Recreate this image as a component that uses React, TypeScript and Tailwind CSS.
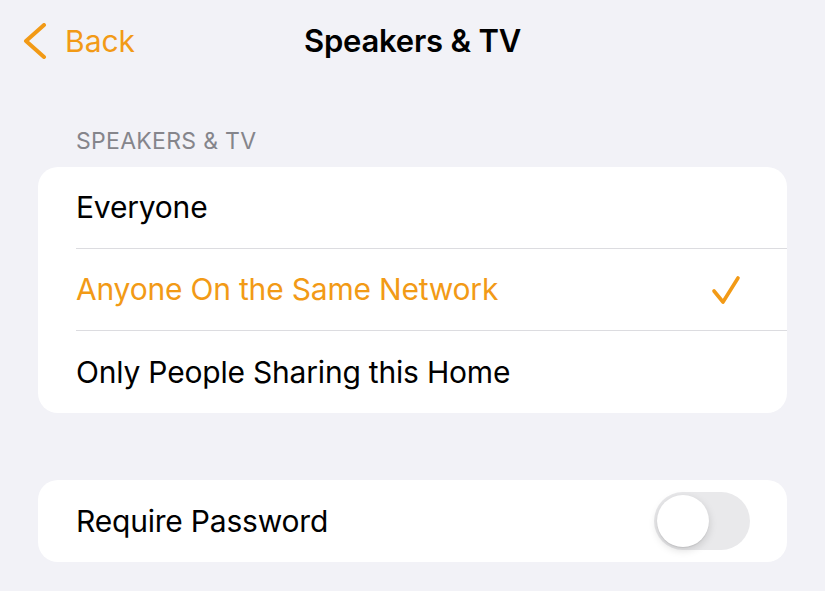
import { useState } from 'react';

const options = ['Everyone', 'Anyone On the Same Network', 'Only People Sharing this Home'];

function Toggle({ on, onChange }: { on: boolean; onChange: (v: boolean) => void }) {
  return (
    <button
      onClick={() => onChange(!on)}
      className={`relative h-[58px] w-[96px] rounded-full p-[3px] ${on ? 'bg-[#34c759]' : 'bg-[#e9e9eb]'}`}
    >
      <span
        className={`block h-[52px] w-[52px] rounded-full bg-white shadow-[0_3px_8px_rgba(0,0,0,0.15),0_1px_1px_rgba(0,0,0,0.08)] ${on ? 'translate-x-[38px]' : ''}`}
      />
    </button>
  );
}

export default function App() {
  const [selected, setSelected] = useState(1);
  const [password, setPassword] = useState(false);

  return (
    <div
      className="h-[591px] w-full overflow-hidden bg-[#f2f2f7] text-black"
      style={{ fontFamily: 'Inter, "Noto Sans", sans-serif' }}
    >
      {/* nav bar */}
      <div className="grid h-[82px] grid-cols-[1fr_auto_1fr] items-center">
        <button className="flex items-center gap-[18px] pl-[23px] text-[30px] text-[#f29a16]">
          <svg width="24" height="36" viewBox="0 0 24 36" fill="none">
            <path
              d="M21 2L3 18l18 16"
              stroke="currentColor"
              strokeWidth="4"
              strokeLinecap="round"
              strokeLinejoin="round"
            />
          </svg>
          <span>Back</span>
        </button>
        <h1 className="text-[31px] font-semibold tracking-[-0.2px]">Speakers &amp; TV</h1>
        <div />
      </div>

      <p className="mt-[45px] pl-[76px] text-[23px] leading-[28px] tracking-[0.3px] text-[#85858b]">
        SPEAKERS &amp; TV
      </p>

      <div className="mx-[38px] mt-[12px] overflow-hidden rounded-[20px] bg-white">
        {options.map((label, i) => (
          <button
            key={label}
            onClick={() => setSelected(i)}
            className="block w-full pl-[38px] text-left"
          >
            <div
              className={`flex h-[82px] items-center justify-between pr-[46px] ${
                i < options.length - 1 ? 'border-b border-[#dcdce0]' : ''
              }`}
            >
              <span
                className={`text-[30px] tracking-[-0.2px] ${i === selected ? 'text-[#f29a16]' : 'text-black'}`}
              >
                {label}
              </span>
              {i === selected && (
                <svg width="30" height="30" viewBox="0 0 30 30" fill="none">
                  <path
                    d="M3 16l9 11L27 3"
                    stroke="#f29a16"
                    strokeWidth="3.6"
                    strokeLinecap="round"
                    strokeLinejoin="round"
                  />
                </svg>
              )}
            </div>
          </button>
        ))}
      </div>

      <div className="mx-[38px] mt-[67px] flex h-[82px] items-center justify-between rounded-[20px] bg-white pl-[38px] pr-[37px]">
        <span className="text-[30px] tracking-[-0.2px]">Require Password</span>
        <Toggle on={password} onChange={setPassword} />
      </div>
    </div>
  );
}
